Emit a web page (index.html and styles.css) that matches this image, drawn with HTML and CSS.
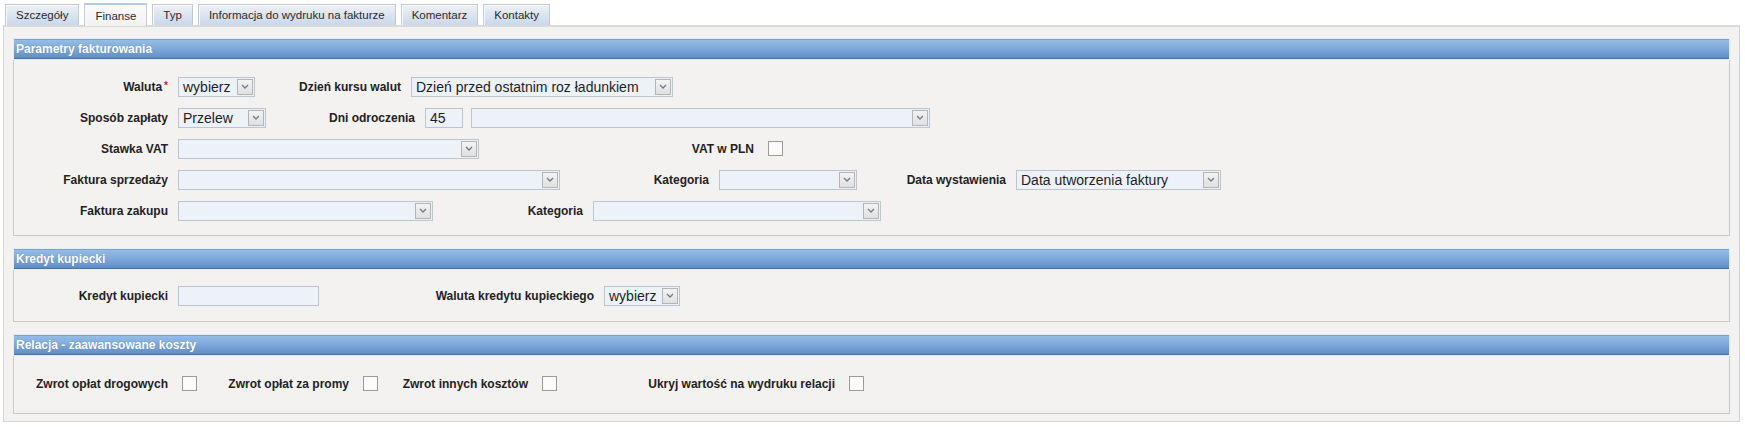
FILE: index.html
```html
<!DOCTYPE html>
<html lang="pl">
<head>
    <meta charset="UTF-8">
    <title>Finanse</title>
    <link rel="stylesheet" href="styles.css">
</head>
<body>
    <div class="tabs">
        <span class="tab">Szczegóły</span>
        <span class="tab active">Finanse</span>
        <span class="tab">Typ</span>
        <span class="tab">Informacja do wydruku na fakturze</span>
        <span class="tab">Komentarz</span>
        <span class="tab">Kontakty</span>
    </div>

    <div class="panel">
        <div class="section">
            <div class="section-head">Parametry fakturowania</div>
            <div class="section-body first-body">
                <div class="row">
                    <label class="lbl first">Waluta<span class="req">*</span></label>
                    <div class="sel w-77"><span class="val">wybierz</span><span class="arr"><svg width="8" height="5" viewBox="0 0 8 5"><path d="M1 1 L4 4 L7 1" fill="none" stroke="#6d7b8c" stroke-width="1.3"/></svg></span></div>
                    <label class="lbl l-156">Dzień kursu walut</label>
                    <div class="sel w-262"><span class="val">Dzień przed ostatnim roz ładunkiem</span><span class="arr"><svg width="8" height="5" viewBox="0 0 8 5"><path d="M1 1 L4 4 L7 1" fill="none" stroke="#6d7b8c" stroke-width="1.3"/></svg></span></div>
                </div>
                <div class="row">
                    <label class="lbl first">Sposób zapłaty</label>
                    <div class="sel w-88"><span class="val">Przelew</span><span class="arr"><svg width="8" height="5" viewBox="0 0 8 5"><path d="M1 1 L4 4 L7 1" fill="none" stroke="#6d7b8c" stroke-width="1.3"/></svg></span></div>
                    <label class="lbl l-159">Dni odroczenia</label>
                    <div class="inp w-38">45</div>
                    <div class="sel w-459 gap-8"><span class="val"></span><span class="arr"><svg width="8" height="5" viewBox="0 0 8 5"><path d="M1 1 L4 4 L7 1" fill="none" stroke="#6d7b8c" stroke-width="1.3"/></svg></span></div>
                </div>
                <div class="row">
                    <label class="lbl first">Stawka VAT</label>
                    <div class="sel w-301"><span class="val"></span><span class="arr"><svg width="8" height="5" viewBox="0 0 8 5"><path d="M1 1 L4 4 L7 1" fill="none" stroke="#6d7b8c" stroke-width="1.3"/></svg></span></div>
                    <label class="lbl l-285">VAT w PLN</label>
                    <span class="cb"></span>
                </div>
                <div class="row">
                    <label class="lbl first">Faktura sprzedaży</label>
                    <div class="sel w-382"><span class="val"></span><span class="arr"><svg width="8" height="5" viewBox="0 0 8 5"><path d="M1 1 L4 4 L7 1" fill="none" stroke="#6d7b8c" stroke-width="1.3"/></svg></span></div>
                    <label class="lbl l-159">Kategoria</label>
                    <div class="sel w-138"><span class="val"></span><span class="arr"><svg width="8" height="5" viewBox="0 0 8 5"><path d="M1 1 L4 4 L7 1" fill="none" stroke="#6d7b8c" stroke-width="1.3"/></svg></span></div>
                    <label class="lbl l-159">Data wystawienia</label>
                    <div class="sel w-205"><span class="val">Data utworzenia faktury</span><span class="arr"><svg width="8" height="5" viewBox="0 0 8 5"><path d="M1 1 L4 4 L7 1" fill="none" stroke="#6d7b8c" stroke-width="1.3"/></svg></span></div>
                </div>
                <div class="row">
                    <label class="lbl first">Faktura zakupu</label>
                    <div class="sel w-255"><span class="val"></span><span class="arr"><svg width="8" height="5" viewBox="0 0 8 5"><path d="M1 1 L4 4 L7 1" fill="none" stroke="#6d7b8c" stroke-width="1.3"/></svg></span></div>
                    <label class="lbl l-160">Kategoria</label>
                    <div class="sel w-288"><span class="val"></span><span class="arr"><svg width="8" height="5" viewBox="0 0 8 5"><path d="M1 1 L4 4 L7 1" fill="none" stroke="#6d7b8c" stroke-width="1.3"/></svg></span></div>
                </div>
            </div>
        </div>

        <div class="section">
            <div class="section-head">Kredyt kupiecki</div>
            <div class="section-body">
                <div class="row">
                    <label class="lbl first">Kredyt kupiecki</label>
                    <div class="inp w-141"></div>
                    <label class="lbl l-285">Waluta kredytu kupieckiego</label>
                    <div class="sel w-76"><span class="val">wybierz</span><span class="arr"><svg width="8" height="5" viewBox="0 0 8 5"><path d="M1 1 L4 4 L7 1" fill="none" stroke="#6d7b8c" stroke-width="1.3"/></svg></span></div>
                </div>
            </div>
        </div>

        <div class="section">
            <div class="section-head">Relacja - zaawansowane koszty</div>
            <div class="section-body roomy">
                <div class="row">
                    <label class="lbl first">Zwrot opłat drogowych</label>
                    <span class="cb"></span>
                    <label class="lbl l-162">Zwrot opłat za promy</label>
                    <span class="cb"></span>
                    <label class="lbl l-160">Zwrot innych kosztów</label>
                    <span class="cb"></span>
                    <label class="lbl l-288">Ukryj wartość na wydruku relacji</label>
                    <span class="cb"></span>
                </div>
            </div>
        </div>
    </div>
</body>
</html>
```

FILE: styles.css
```css
* {
    margin: 0;
    padding: 0;
    box-sizing: border-box;
}

body {
    font-family: 'Liberation Sans', Arial, sans-serif;
    background-color: #fff;
    color: #222;
}

/* zakladki */
.tabs {
    display: flex;
    align-items: flex-end;
    gap: 5px;
    height: 25px;
    padding-left: 5px;
}

.tab {
    height: 21px;
    line-height: 20px;
    padding: 0 10px;
    font-size: 11.5px;
    color: #2b2b2b;
    border: 1px solid #c3cad4;
    border-bottom: none;
    background: linear-gradient(#eef1f5, #c9d8eb);
    box-shadow: inset 1px 1px 0 #f7f9fc;
}

.tab.active {
    height: 23px;
    line-height: 22px;
    background: linear-gradient(#fbfbfb, #f4f1f1);
    border-color: #c6cbd2;
    border-top: 2px solid #b3cbe6;
    position: relative;
    top: 1px;
}

.panel {
    margin: 0 5px 0 3px;
    padding: 11px 9px 7px 9px;
    background-color: #f4f1f1;
    border: 1px solid #d3d3d3;
    border-top: 2px solid #dadada;
}

.section {
    background-color: #f4f1f1;
    border: 1px solid #c9c9c9;
    margin-bottom: 12px;
}

.section:last-child {
    margin-bottom: 0;
}

.section-head {
    height: 20px;
    line-height: 18px;
    padding-left: 2px;
    font-size: 12px;
    font-weight: bold;
    color: #fff;
    background: linear-gradient(#93bde6, #80aadb 45%, #5f8dc8);
    border-top: 1px solid #7da2cf;
    border-bottom: 1px solid #4e6f9f;
    box-shadow: 0 0 0 1px #e3edf7;
    text-shadow: 0 0 1px rgba(40, 70, 120, 0.4);
}

.section-body {
    padding: 11px 0 10px;
}

.section-body.first-body {
    padding: 12px 0 9px;
}

.section-body.roomy {
    padding: 13px 0 14px;
}

.row {
    display: flex;
    align-items: center;
    height: 31px;
}

.lbl {
    flex-shrink: 0;
    text-align: right;
    padding-right: 10px;
    font-size: 12px;
    font-weight: bold;
    color: #222;
}

.lbl.first { width: 164px; }
.l-156 { width: 156px; }
.l-159 { width: 159px; }
.l-160 { width: 160px; }
.l-162 { width: 162px; }
.l-285 { width: 285px; }
.l-288 { width: 288px; }

.req {
    color: #d22;
    font-size: 10px;
    margin-left: 2px;
    vertical-align: top;
}

/* pola */
.sel, .inp {
    flex-shrink: 0;
    height: 20px;
    border: 1px solid #bcc4cf;
    background-color: #edf1f8;
    font-size: 14px;
    color: #1e1e1e;
}

.sel {
    display: flex;
    align-items: stretch;
    padding: 1px;
}

.sel .val {
    flex: 1;
    padding-left: 3px;
    line-height: 16px;
    white-space: nowrap;
    overflow: hidden;
}

.sel .arr {
    width: 16px;
    display: flex;
    align-items: center;
    justify-content: center;
    border: 1px solid #b4b4b4;
    background: linear-gradient(#f3f3f3, #e0e0e0);
}

.inp {
    padding-left: 4px;
    line-height: 18px;
}

.gap-8 { margin-left: 8px; }

.w-38 { width: 38px; }
.w-76 { width: 76px; }
.w-77 { width: 77px; }
.w-88 { width: 88px; }
.w-138 { width: 138px; }
.w-141 { width: 141px; }
.w-205 { width: 205px; }
.w-255 { width: 255px; }
.w-262 { width: 262px; }
.w-288 { width: 288px; }
.w-301 { width: 301px; }
.w-382 { width: 382px; }
.w-459 { width: 459px; }

.cb {
    flex-shrink: 0;
    width: 15px;
    height: 15px;
    margin-left: 4px;
    border: 1px solid #9c9c9c;
    background-color: #fbfbfb;
}
```
